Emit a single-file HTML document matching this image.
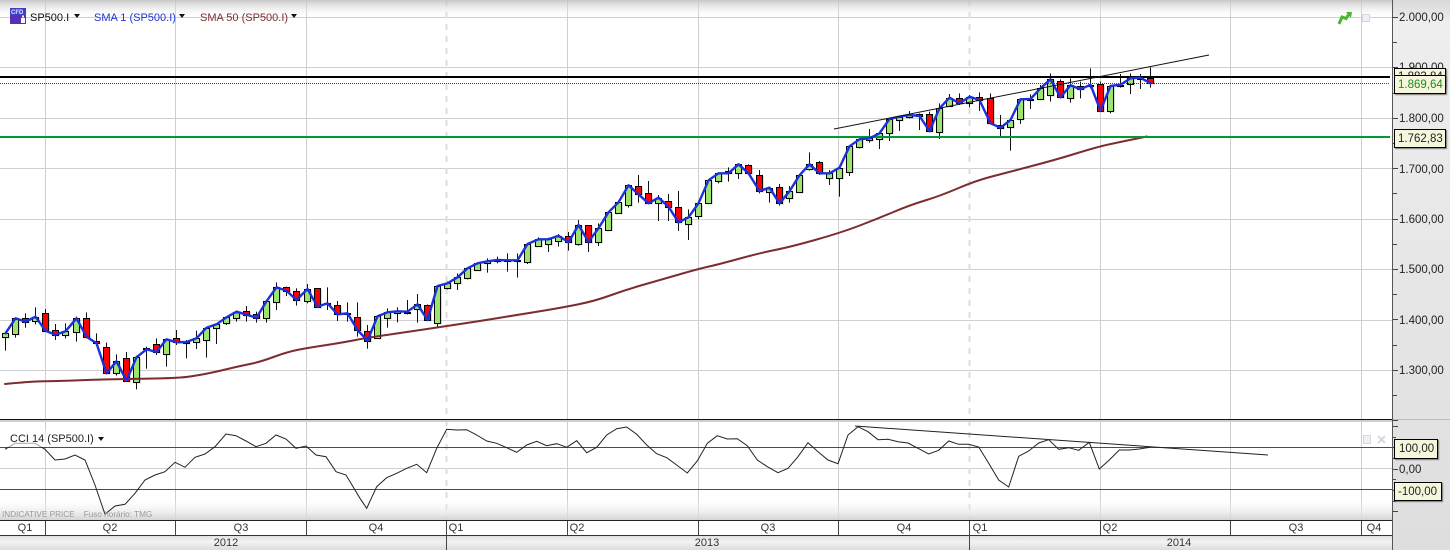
<!DOCTYPE html>
<html>
<head>
<meta charset="utf-8">
<title>SP500.I</title>
<style>
html,body{margin:0;padding:0;background:#fff}
#w{position:relative;width:1450px;height:550px;overflow:hidden;background:#fff;font-family:"Liberation Sans",sans-serif;font-size:11px;color:#222}
#w svg{position:absolute;left:0;top:0}
.t{position:absolute;white-space:nowrap;line-height:14px;height:14px}
.a{position:absolute;left:1399px;font-size:11.5px;line-height:14px;white-space:nowrap;color:#222}
.c{position:absolute;transform:translateX(-50%);font-size:11px;line-height:14px;color:#333;white-space:nowrap}
.b{position:absolute;background:#f6f6dc;border:1px solid #000;box-shadow:1px 1px 1px #777;font-size:11.5px;line-height:19px;padding-left:3px;box-sizing:border-box;white-space:nowrap;color:#222}
.ar{position:absolute;width:0;height:0;border-left:3px solid transparent;border-right:3px solid transparent;border-top:4px solid #111}
</style>
</head>
<body>
<div id="w">
<svg id="s" width="1450" height="550" viewBox="0 0 1450 550" xmlns="http://www.w3.org/2000/svg">
<defs>
<linearGradient id="gt" x1="0" y1="0" x2="0" y2="1"><stop offset="0" stop-color="#bdbdbd" stop-opacity=".85"/><stop offset="1" stop-color="#fff" stop-opacity="0"/></linearGradient>
<linearGradient id="gb" x1="0" y1="0" x2="0" y2="1"><stop offset="0" stop-color="#fff" stop-opacity="0"/><stop offset="1" stop-color="#d4d4d4"/></linearGradient>
<linearGradient id="gy" x1="0" y1="0" x2="0" y2="1"><stop offset="0" stop-color="#dedede"/><stop offset=".45" stop-color="#f3f3f3"/><stop offset="1" stop-color="#dcdcdc"/></linearGradient>
<linearGradient id="gr" x1="0" y1="0" x2="0" y2="1"><stop offset="0" stop-color="#d8d8d8"/><stop offset=".04" stop-color="#eeeeee"/><stop offset="1" stop-color="#dedede"/></linearGradient>
</defs>
<rect x="1392" y="0" width="58" height="550" fill="url(#gr)"/>
<g id="grid" stroke="#cfcfcf" stroke-width="1" fill="none"></g>
<g id="cand"></g>
<line x1="0" x2="1390" y1="77" y2="77" stroke="#000" stroke-width="2"/>
<line x1="0" x2="1390" y1="83.5" y2="83.5" stroke="#e00000" stroke-width="1" stroke-dasharray="1 1"/>
<path id="sma50" fill="none" stroke="#7c2d2d" stroke-width="2" stroke-linejoin="round" stroke-linecap="round"/>
<line x1="0" x2="1390" y1="137" y2="137" stroke="#009933" stroke-width="2"/>
<polyline id="blue" fill="none" stroke="#1c30dc" stroke-width="2.4" stroke-linejoin="round" stroke-linecap="round"/>
<line x1="834" y1="129" x2="1209" y2="55" stroke="#111" stroke-width="1"/>
<rect x="0" y="0" width="1392" height="18" fill="url(#gt)"/>
<rect x="0" y="498" width="1392" height="22" fill="url(#gb)"/>
<line x1="0" x2="1392" y1="447.5" y2="447.5" stroke="#ff0000" stroke-width="1"/>
<line x1="0" x2="1392" y1="489.5" y2="489.5" stroke="#008000" stroke-width="1"/>
<polyline id="cci" fill="none" stroke="#222" stroke-width="1"/>
<line x1="855" y1="426" x2="1268" y2="455" stroke="#222" stroke-width="1"/>
<rect x="0" y="431" width="109" height="16" fill="#fff" fill-opacity=".6"/>
<rect x="0" y="419" width="1392" height="1" fill="#111"/>
<rect x="0" y="420" width="1392" height="2" fill="#cfcfcf"/>
<rect x="1392" y="419" width="58" height="1" fill="#bbb"/>
<rect x="0" y="521" width="1392" height="14" fill="#fff"/>
<rect x="0" y="535" width="1392" height="15" fill="url(#gy)"/>
<rect x="0" y="520" width="1392" height="1" fill="#222"/>
<rect x="0" y="535" width="1392" height="1" fill="#333"/>
<g id="ticks" stroke="#444" stroke-width="1" fill="none"></g>
<rect x="1392" y="0" width="1" height="550" fill="#555"/>
<path d="M1339 24 L1342 17 L1346 18.500 L1349 14" fill="none" stroke="#4cb534" stroke-width="3"/>
<path d="M1346 12 L1352 12 L1351 18 Z" fill="#4cb534"/>
<rect x="1362.500" y="14.500" width="7" height="7" fill="#eef0f6" stroke="#d4d8e2"/>
<rect x="1363.500" y="435.500" width="7" height="8" fill="#eef0f6" stroke="#d4d8e2"/>
<path d="M1378 436 L1385 443 M1385 436 L1378 443" stroke="#d6dae4" stroke-width="2"/>
<rect x="10" y="8" width="16" height="16" fill="#5a2fb8"/>
<rect x="10" y="8" width="16" height="8" fill="#3d3fc4"/>
<rect x="21" y="18" width="4" height="5" fill="#fff"/>
<rect x="22" y="15.500" width="2" height="2" fill="#fff"/>
</svg>
<div style="position:absolute;left:11px;top:10px;font-size:6px;line-height:7px;color:#e8e8ff;font-weight:bold">CFD</div>
<div class="t" style="left:30px;top:11px;color:#111">SP500.I</div>
<div class="ar" style="left:74px;top:14px"></div>
<div class="t" style="left:94px;top:11px;color:#2233cc">SMA 1 (SP500.I)</div>
<div class="ar" style="left:179px;top:14px"></div>
<div class="t" style="left:200px;top:11px;color:#7c2d2d">SMA 50 (SP500.I)</div>
<div class="ar" style="left:291px;top:14px"></div>
<div class="t" style="left:10px;top:432px;color:#222">CCI 14 (SP500.I)</div>
<div class="ar" style="left:98px;top:437px"></div>
<div class="t" style="left:2px;top:508px;font-size:8.2px;color:#9a9a9a">INDICATIVE PRICE &nbsp;&nbsp;&nbsp;Fuso horário: TMG</div>

<div class="a" style="top:11px">2.000,00</div>
<div class="a" style="top:61px">1.900,00</div>
<div class="a" style="top:112px">1.800,00</div>
<div class="a" style="top:163px">1.700,00</div>
<div class="a" style="top:213px">1.600,00</div>
<div class="a" style="top:263px">1.500,00</div>
<div class="a" style="top:314px">1.400,00</div>
<div class="a" style="top:364px">1.300,00</div>
<div class="a" style="top:463px">0,00</div>

<div class="b" style="left:1394px;top:68px;width:52px;height:20px;padding-top:0;line-height:17px">1.883,84</div>
<div class="b" style="left:1394px;top:75px;width:52px;height:19px;color:#1f8a1f">1.869,64</div>
<div class="b" style="left:1394px;top:129px;width:52px;height:19px">1.762,83</div>
<div class="b" style="left:1394px;top:439px;width:44px;height:20px;padding-left:4px">100,00</div>
<div class="b" style="left:1394px;top:482px;width:48px;height:19px">-100,00</div>

<div class="c" style="left:25px;top:521px">Q1</div>
<div class="c" style="left:110px;top:521px">Q2</div>
<div class="c" style="left:241px;top:521px">Q3</div>
<div class="c" style="left:376px;top:521px">Q4</div>
<div class="c" style="left:456px;top:521px">Q1</div>
<div class="c" style="left:577px;top:521px">Q2</div>
<div class="c" style="left:768px;top:521px">Q3</div>
<div class="c" style="left:904px;top:521px">Q4</div>
<div class="c" style="left:980px;top:521px">Q1</div>
<div class="c" style="left:1110px;top:521px">Q2</div>
<div class="c" style="left:1296px;top:521px">Q3</div>
<div class="c" style="left:1374px;top:521px">Q4</div>
<div class="c" style="left:226px;top:536px">2012</div>
<div class="c" style="left:707px;top:536px">2013</div>
<div class="c" style="left:1179px;top:536px">2014</div>
</div>
<script>
(function(){
var NS="http://www.w3.org/2000/svg";
function el(p,n,a){var e=document.createElementNS(NS,n);for(var k in a)e.setAttribute(k,a[k]);p.appendChild(e);return e}
var grid=document.getElementById("grid"),cand=document.getElementById("cand"),ticks=document.getElementById("ticks");
var hs=[17.5,67.5,118.5,168.5,219.5,269.5,320.5,370.5];
hs.forEach(function(y){el(grid,"line",{x1:0,x2:1392,y1:y,y2:y})});
el(grid,"line",{x1:0,x2:1392,y1:468.5,y2:468.5});
var vs=[45.5,175.5,306.5,446.5,567.5,698.5,838.5,969.5,1100.5,1230.5,1361.5];
vs.forEach(function(x){
  var dash=(x==446.5||x==969.5);
  var a={x1:x,x2:x,y1:0,y2:520};
  if(dash){a["stroke-dasharray"]="6 6";a["stroke-width"]=2;a.stroke="#dcdcdc"}
  el(grid,"line",a);
  el(ticks,"line",{x1:x,x2:x,y1:521,y2:dash?550:535});
});
for(var i=0;i<9;i++){var y=17.5+i*50.4;
  el(ticks,"line",{x1:1392,x2:1398,y1:Math.floor(y)+.5,y2:Math.floor(y)+.5});
  if(i<8){var m=Math.floor(y+25.2)+.5;el(ticks,"line",{x1:1392,x2:1397,y1:m,y2:m})}
}
[426,447,469,490,511].forEach(function(y){el(ticks,"line",{x1:1392,x2:1398,y1:y+.5,y2:y+.5})});
[437,458,479,501].forEach(function(y){el(ticks,"line",{x1:1392,x2:1396,y1:y+.5,y2:y+.5})});
var segs=[
[290,[[125,182,130,140,'g'],[83,143,85,133,'g'],[70,113,85,95,'r'],[52,103,80,92,'g'],[57,125,70,122,'r'],[102,150,121,134,'r'],[100,145,124,136,'g'],[80,155,85,127,'g'],[67,145,85,140,'r'],[130,165,154,160,'r'],[158,252,170,250,'r'],[193,257,214,249,'g'],[186,275,205,272,'r'],[197,298,202,277,'g'],[170,236,175,178,'r'],[145,195,163,186,'r'],[148,230,148,193,'g'],[120,165,145,157,'r'],[150,205,156,158,'g'],[122,177,145,157,'g'],[112,203,113,151,'g'],[100,162,103,115,'g'],[82,105,82,100,'g'],[62,95,65,85,'g']]],
[270,[[108,155,124,134,'r'],[125,158,133,143,'r'],[93,158,94,143,'g'],[37,120,52,95,'g'],[50,78,52,62,'r'],[55,107,64,90,'r'],[42,100,57,92,'g'],[55,112,55,110,'r'],[52,120,100,103,'g'],[93,153,106,133,'r'],[97,155,130,133,'g'],[97,200,140,180,'r'],[165,236,182,212,'r'],[138,205,139,205,'g'],[115,173,127,143,'g'],[112,157,124,128,'g'],[90,133,125,130,'g'],[72,158,103,118,'g'],[103,150,106,150,'r'],[48,170,48,160,'g']]],
[240,[[125,148,130,143,'g'],[100,150,112,130,'g'],[82,118,85,115,'g'],[68,93,70,90,'g'],[55,98,64,70,'g'],[50,70,60,64,'g'],[40,95,61,64,'g'],[40,113,61,64,'g'],[10,72,12,65,'g']]],
[160,[[232,260,238,257,'g'],[233,276,238,253,'g'],[222,260,227,244,'g'],[216,272,227,247,'r'],[180,257,195,253,'g'],[196,276,196,245,'r'],[190,258,205,247,'g'],[155,212,157,209,'g'],[125,160,127,160,'g'],[75,143,76,136,'g'],[45,128,79,103,'r'],[63,130,100,130,'r'],[105,183,113,130,'g'],[102,183,122,140,'r'],[93,213,140,187,'r'],[148,240,172,193,'g'],[130,178,130,169,'g'],[60,130,61,128,'g']]],
[110,[[187,220,190,214,'g'],[172,215,182,190,'r'],[160,207,163,190,'g'],[163,192,166,190,'r'],[180,250,196,243,'r'],[230,278,233,247,'g'],[222,287,232,280,'r'],[228,278,244,265,'g'],[195,247,196,247,'g'],[127,182,163,178,'g'],[153,195,157,190,'r'],[180,225,190,205,'g'],[170,260,173,205,'g'],[107,198,109,187,'g'],[85,115,88,112,'g'],[57,98,85,90,'g'],[68,117,70,88,'g'],[25,93,27,70,'g'],[17,63,20,30,'g'],[3,25,15,22,'g'],[10,60,12,18,'r'],[5,67,13,63,'r']]],
[60,[[130,237,145,215,'g'],[102,140,113,138,'g'],[100,135,115,130,'r'],[105,142,110,130,'g'],[97,153,110,120,'r'],[100,190,115,190,'r'],[165,228,194,203,'r'],[180,272,180,200,'g'],[118,192,118,178,'g'],[103,147,117,121,'g'],[75,120,85,118,'g'],[40,125,58,106,'g'],[58,115,62,112,'r'],[55,128,76,115,'g'],[65,115,79,88,'r'],[25,85,74,78,'g'],[65,155,73,152,'r'],[77,160,78,154,'g'],[42,83,74,78,'g'],[40,102,55,72,'g'],[42,87,53,57,'g'],[22,83,53,70,'r']]]
];
var idx=0,pts=[];
function S(v){return Math.round(v)+.5}
segs.forEach(function(s){
  var off=s[0];
  s[1].forEach(function(c){
    var xr=5.7+10.044*idx,x=Math.floor(xr)+.5;
    var wt=off+c[0]/3,wb=off+c[1]/3,bt=off+c[2]/3,bb=off+c[3]/3;
    el(cand,"rect",{x:x-2.5,y:S(bt)+1,width:7,height:Math.max(1,S(bb)-S(bt)),fill:"#000","fill-opacity":.14});
    el(cand,"line",{x1:x,x2:x,y1:wt,y2:wb,stroke:"#111","stroke-width":1});
    el(cand,"rect",{x:x-3,y:S(bt),width:6,height:Math.max(1,S(bb)-S(bt)),fill:c[4]=='r'?"#ff0000":"#9be56e",stroke:"#000","stroke-width":1});
    pts.push(x+","+(c[4]=='r'?bb:bt).toFixed(1));
    idx++;
  });
});
document.getElementById("blue").setAttribute("points",pts.join(" "));
/* smooth SMA 50 */
var b=[[5,384],[30,381.5],[60,381],[100,379.5],[130,379],[180,378],[200,375],[215,372],[240,366],[260,362],[287,352],[307,348],[340,343],[366,338],[407,332],[447,326],[480,321],[520,314.5],[560,308],[595,301],[625,290],[660,280],[698,269],[720,264],[760,253],[790,247],[840,233],[877,219],[910,205],[940,196],[975,181],[1005,173],[1055,160],[1097,147],[1120,142],[1147,136.5]];
var d="M"+b[0][0]+" "+b[0][1];
for(var j=1;j<b.length-1;j++){d+=" Q"+b[j][0]+" "+b[j][1]+" "+((b[j][0]+b[j+1][0])/2)+" "+((b[j][1]+b[j+1][1])/2)}
d+=" L"+b[b.length-1][0]+" "+b[b.length-1][1];
document.getElementById("sma50").setAttribute("d",d);
var cc=[
[0,[[15,103],[45,85],[105,85],[135,103],[165,135],[195,132],[225,120],[255,135],[285,210],[315,298],[345,273],[375,268],[405,235],[435,195],[465,180],[495,170],[525,142],[555,157],[585,127],[615,117],[645,95],[678,57],[708,62],[738,78],[768,95],[798,85],[828,60],[858,72],[888,100],[918,93],[948,120],[978,125],[1008,170],[1038,180]]],
[360,[[0,250],[20,280],[50,215],[80,188],[110,175],[140,160],[170,148],[200,173],[230,100],[260,43],[290,45],[320,44],[350,60],[380,78],[410,85],[440,98],[470,112],[500,90],[530,79],[560,92],[590,86],[620,97],[650,77],[680,113],[710,97],[740,60],[770,41],[800,36],[830,58],[860,90],[890,116],[920,128],[950,150],[982,174],[1012,138],[1042,85],[1072,62]]],
[720,[[22,72],[52,71],[82,92],[112,135],[142,155],[174,173],[204,160],[234,125],[264,83],[294,110],[324,135],[354,146],[384,60],[414,35],[444,50],[474,74],[504,73],[534,80],[564,84],[594,100],[626,117],[656,106],[686,78],[716,88],[746,88],[776,96],[806,145],[836,195],[866,216],[896,124],[926,108],[956,84],[986,74],[1016,103],[1046,98],[1076,106]]],
[1080,[[28,82],[58,162],[88,135],[118,105],[148,105],[178,102],[210,97]]]
];
var cp=[];
cc.forEach(function(g){g[1].forEach(function(p){cp.push((g[0]+p[0]/3).toFixed(1)+","+(415+p[1]/3).toFixed(1))})});
document.getElementById("cci").setAttribute("points",cp.join(" "));
})();
</script>
</body>
</html>
